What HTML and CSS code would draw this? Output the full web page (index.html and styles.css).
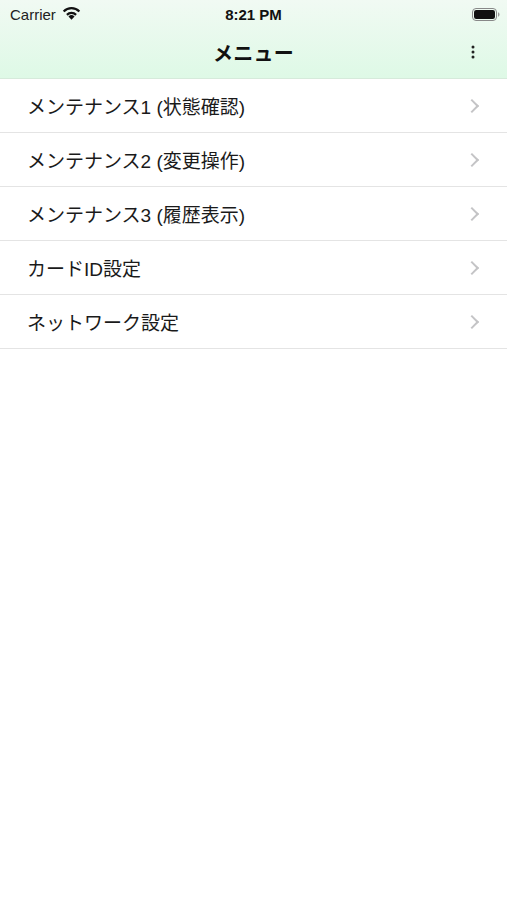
FILE: index.html
```html
<!DOCTYPE html>
<html lang="ja">
<head>
<meta charset="utf-8">
<link rel="stylesheet" href="styles.css">
</head>
<body>
<div class="app">
  <header class="top">
    <div class="status">
      <div class="st-left">
        <span class="carrier">Carrier</span>
        <svg class="wifi" width="19" height="14" viewBox="0 0 18 13">
          <path d="M9 12.8 L6.1 9.7 A4.2 4.2 0 0 1 11.9 9.7 Z" fill="#111"/>
          <path d="M3.9 7.4 A7.3 7.3 0 0 1 14.1 7.4 L12.6 9 A5.1 5.1 0 0 0 5.4 9 Z" fill="#111"/>
          <path d="M0.8 4.3 A11.5 11.5 0 0 1 17.2 4.3 L15.7 5.9 A9.3 9.3 0 0 0 2.3 5.9 Z" fill="#111"/>
        </svg>
      </div>
      <div class="st-time">8:21 PM</div>
      <div class="st-right">
        <svg width="28" height="13" viewBox="0 0 28 13">
          <rect x="0.5" y="0.5" width="24" height="12" rx="3.5" fill="none" stroke="#888" stroke-width="1"/>
          <rect x="2" y="2" width="21" height="9" rx="2.2" fill="#111"/>
          <path d="M26 4.3 Q27.5 4.6 27.5 6.5 Q27.5 8.4 26 8.7 Z" fill="#999"/>
        </svg>
      </div>
    </div>
    <div class="nav">
      <h1 class="title">メニュー</h1>
      <svg class="more" width="4" height="14" viewBox="0 0 4 14">
        <circle cx="2" cy="2" r="1.5" fill="#222"/>
        <circle cx="2" cy="7" r="1.5" fill="#222"/>
        <circle cx="2" cy="12" r="1.5" fill="#222"/>
      </svg>
    </div>
  </header>
  <ul class="list">
    <li class="row"><span class="label">メンテナンス1 (状態確認)</span><span class="chev"></span></li>
    <li class="row"><span class="label">メンテナンス2 (変更操作)</span><span class="chev"></span></li>
    <li class="row"><span class="label">メンテナンス3 (履歴表示)</span><span class="chev"></span></li>
    <li class="row"><span class="label">カードID設定</span><span class="chev"></span></li>
    <li class="row"><span class="label">ネットワーク設定</span><span class="chev"></span></li>
  </ul>
</div>
</body>
</html>
```

FILE: styles.css
```css
* { box-sizing: border-box; }
html, body { margin: 0; padding: 0; background: #fff; }
body {
  font-family: "Liberation Sans", "Noto Sans CJK JP", sans-serif;
  color: #111;
  width: 507px;
  height: 900px;
  overflow: hidden;
}
.top {
  height: 79px;
  background: linear-gradient(to bottom, #f1faf3 0%, #def9e6 100%);
  border-bottom: 1px solid #d6eadb;
  display: flex;
  flex-direction: column;
}
.status {
  height: 28px;
  display: flex;
  align-items: center;
  justify-content: space-between;
  padding: 0 7px 0 10px;
  position: relative;
  font-size: 15px;
}
.st-left { display: flex; align-items: center; gap: 6px; }
.carrier { color: #222; }
.wifi { margin-top: -2px; }
.st-time {
  position: absolute;
  left: 0; right: 0;
  text-align: center;
  font-weight: bold;
  font-size: 15px;
  color: #111;
  pointer-events: none;
}
.st-right { display: flex; align-items: center; }
.nav {
  flex: 1;
  display: flex;
  align-items: center;
  justify-content: center;
  position: relative;
  padding-bottom: 2px;
}
.title {
  margin: 0;
  font-size: 20px;
  font-weight: bold;
  font-family: "Noto Sans CJK JP", sans-serif;
  letter-spacing: 0.3px;
}
.more {
  position: absolute;
  right: 32px;
  top: 17px;
}
.list { list-style: none; margin: 0; padding: 0; }
.row {
  height: 54px;
  border-bottom: 1px solid #e4e4e4;
  display: flex;
  align-items: center;
  justify-content: space-between;
  padding: 0 28px 0 27px;
}
.label {
  font-size: 19px;
  color: #1a1a1a;
}
.chev {
  width: 10px;
  height: 10px;
  border-right: 2px solid #c4c4c6;
  border-top: 2px solid #c4c4c6;
  transform: rotate(45deg);
  margin-right: 2px;
}
```
